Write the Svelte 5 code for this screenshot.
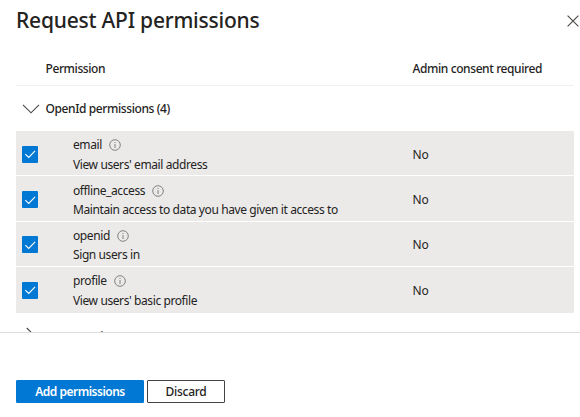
<script>
  const permissions = [
    { name: 'email', description: "View users' email address", consent: 'No' },
    { name: 'offline_access', description: 'Maintain access to data you have given it access to', consent: 'No' },
    { name: 'openid', description: 'Sign users in', consent: 'No' },
    { name: 'profile', description: "View users' basic profile", consent: 'No' }
  ];
</script>

<main class="panel">
  <header>
    <h1>Request API permissions</h1>
    <svg class="close" width="12" height="12" viewBox="0 0 12 12"><path d="M.6.6l10.8 10.8M11.4.6L.6 11.4" /></svg>
  </header>

  <div class="list">
    <div class="columns">
      <span class="first">Permission</span>
      <span>Admin consent required</span>
    </div>
    <div class="group">
      <svg width="18" height="10" viewBox="0 0 18 10"><path d="M1 .8l8 8 8-8" /></svg>
      <span>OpenId permissions (4)</span>
    </div>
    <div class="rows">
      {#each permissions as item}
        <div class="row">
          <span class="check">
            <svg width="16" height="16" viewBox="0 0 16 16"><path d="M3.3 8.1l3.4 3.3 6.4-6.6" /></svg>
          </span>
          <div class="detail">
            <div class="name">
              <span>{item.name}</span>
              <svg width="12" height="12" viewBox="0 0 12 12">
                <circle cx="6" cy="6" r="5.3" />
                <path d="M6 5v4M6 3v1" />
              </svg>
            </div>
            <div class="description">{item.description}</div>
          </div>
          <span class="consent">{item.consent}</span>
        </div>
      {/each}
    </div>
    <div class="next">
      <svg width="10" height="18" viewBox="0 0 10 18"><path d="M.8 1l8 8-8 8" /></svg>
      <span>AccessReview</span>
    </div>
  </div>

  <footer>
    <button class="primary">Add permissions</button>
    <button class="secondary">Discard</button>
  </footer>
</main>

<style>
  :global(body) { margin: 0; background: #fff; }
  .panel {
    width: 580px;
    height: 417px;
    overflow: hidden;
    display: flex;
    flex-direction: column;
    box-sizing: border-box;
    background: #fff;
    color: #242322;
    font: 12px/18px "Noto Sans", "Open Sans", sans-serif;
    letter-spacing: -0.4px;
  }
  svg { display: block; fill: none; stroke: #484644; stroke-width: 1.1; flex: none; }
  header {
    height: 54px;
    flex: none;
    display: flex;
    justify-content: space-between;
    padding: 0 1px 0 16px;
    box-sizing: border-box;
  }
  h1 { margin: 5px 0 0; font-size: 21px; line-height: 30px; font-weight: 500; letter-spacing: -0.22px; white-space: nowrap; }
  .close { margin-top: 15px; }
  .list { height: 278px; flex: none; overflow: hidden; padding: 0 6px 0 16px; }
  .columns {
    height: 32px;
    box-sizing: border-box;
    border-bottom: 1px solid #f1f0ef;
    display: flex;
    padding: 6px 0 0 29.5px;
    font-weight: 500;
  }
  .first { width: 367px; flex: none; }
  .group {
    height: 45px;
    display: flex;
    align-items: center;
    gap: 5.5px;
    padding-left: 6px;
    box-sizing: border-box;
    font-weight: 500;
  }
  .rows { display: flex; flex-direction: column; background: #ebeae9; }
  .row {
    height: 45.4px;
    box-sizing: border-box;
    border-bottom: 1px solid #fff;
    display: flex;
    align-items: center;
    padding: 3px 0 0 6px;
  }
  .row:last-child { border-bottom-color: #ebeae9; }
  .check { width: 16px; height: 17px; margin-bottom: 1px; display: flex; align-items: center; background: #0078d4; border-radius: 1px; }
  .check svg { stroke: #fff; }
  .detail { width: 339.5px; margin-left: 35px; flex: none; }
  .name { display: flex; align-items: center; gap: 7.3px; height: 19px; }
  .name svg { stroke: #797775; stroke-width: 0.9; }
  .description { height: 19px; line-height: 19px; }
  .consent { letter-spacing: -0.2px; }
  .next { display: flex; gap: 9px; padding: 14px 0 0 10px; font-weight: 500; }
  .next span { margin-top: 1px; }
  footer {
    height: 85px;
    box-sizing: border-box;
    border-top: 1px solid #dedddc;
    display: flex;
    gap: 3px;
    padding: 47px 0 0 16px;
  }
  button {
    height: 23px;
    box-sizing: border-box;
    padding: 0;
    border: 1px solid #444;
    border-radius: 1px;
    font: inherit;
    letter-spacing: -0.25px;
    line-height: 20px;
    font-weight: 500;
    color: #242322;
    background: #fff;
  }
  .primary { width: 128px; border-color: #0078d4; background: #0078d4; color: #fff; font-weight: 600; letter-spacing: -0.5px; }
  .secondary { width: 78px; }
</style>
